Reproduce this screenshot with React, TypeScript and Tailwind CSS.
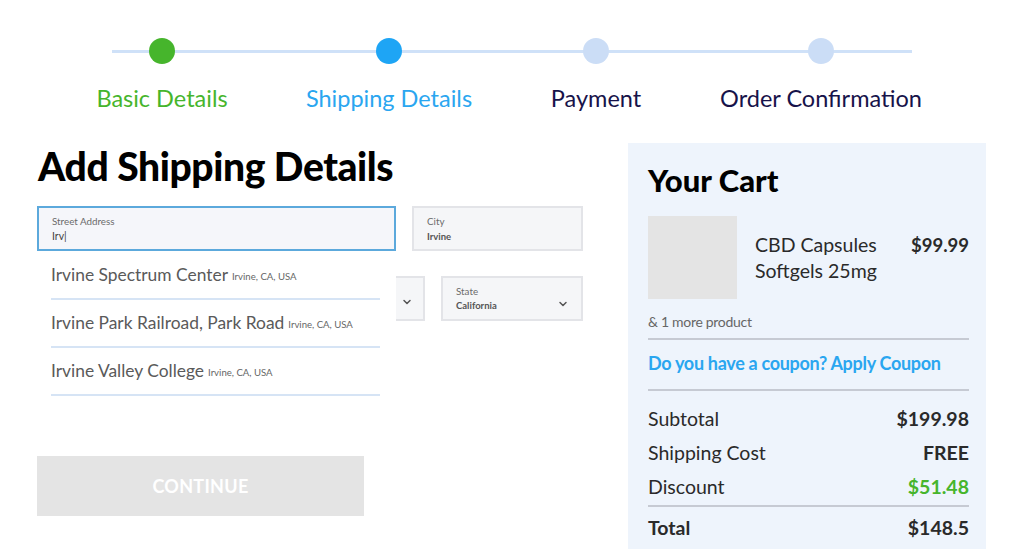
import { ChevronDown } from "lucide-react";

const steps = [
  { label: "Basic Details", dot: "bg-[#46b52c]", text: "text-[#46b52c]", ml: "ml-[62px]" },
  { label: "Shipping Details", dot: "bg-[#1ea5f5]", text: "text-[#2aa6f0]", ml: "ml-[27px]" },
  { label: "Payment", dot: "bg-[#cbddf6]", text: "text-[#17134a]", ml: "ml-[7px]" },
  { label: "Order Confirmation", dot: "bg-[#cbddf6]", text: "text-[#17134a]", ml: "ml-[25px]" },
];

const suggestions = [
  "Irvine Spectrum Center",
  "Irvine Park Railroad, Park Road",
  "Irvine Valley College",
];

const App = () => {
  return (
    <main className="h-[549px] w-[1024px] overflow-hidden bg-white font-['Lato',sans-serif]">
      {/* stepper */}
      <div className="relative pt-[38px]">
        <div className="absolute left-[112px] top-[50px] h-[3px] w-[800px] bg-[#cfe1f8]" />
        <div className="relative flex">
          {steps.map((s) => (
            <div key={s.label} className={`${s.ml} flex w-[200px] flex-col items-center`}>
              <div className={`h-[26px] w-[26px] rounded-full ${s.dot}`} />
              <span className={`mt-[19px] whitespace-nowrap text-[23.5px] leading-[30px] ${s.text}`}>{s.label}</span>
            </div>
          ))}
        </div>
      </div>

      <div className="mt-[30px] flex">
        {/* form */}
        <section className="ml-[37px] w-[546px] pt-[1px]">
          <h1 className="ml-[1px] whitespace-nowrap text-[39px] font-black leading-[44px] tracking-[-0.4px] text-black">
            Add Shipping Details
          </h1>

          <div className="relative mt-[18px]">
            <div className="flex gap-[16px]">
              <div className="h-[45px] w-[359px] border-2 border-[#5ca9dc] bg-[#f5f6fa] px-[13px] pt-[7px]">
                <div className="text-[9.8px] leading-[12px] text-[#6b6b6b]">Street Address</div>
                <div className="mt-[3px] text-[10.5px] leading-[12px] text-[#444]">Irv|</div>
              </div>
              <div className="h-[45px] flex-1 border-2 border-[#e3e4e8] bg-[#f5f6f8] px-[13px] pt-[7px]">
                <div className="text-[9.8px] leading-[12px] text-[#6b6b6b]">City</div>
                <div className="mt-[4px] text-[9.5px] font-bold leading-[12px] text-[#555]">Irvine</div>
              </div>
            </div>

            <div className="mt-[25px] flex gap-[16px]">
              <div className="flex h-[45px] w-[388px] items-end justify-end border-2 border-[#e3e4e8] bg-[#f5f6f8] px-[10px] pb-[11px]">
                <ChevronDown className="h-[12px] w-[12px] text-[#555]" strokeWidth={3} />
              </div>
              <div className="flex h-[45px] flex-1 items-center justify-between border-2 border-[#e3e4e8] bg-[#f5f6f8] pl-[13px] pr-[12px]">
                <div>
                  <div className="text-[9.8px] leading-[12px] text-[#6b6b6b]">State</div>
                  <div className="mt-[3px] text-[9.5px] font-bold leading-[12px] text-[#555]">California</div>
                </div>
                <ChevronDown className="mt-[10px] h-[12px] w-[12px] text-[#555]" strokeWidth={3} />
              </div>
            </div>

            {/* autocomplete menu */}
            <ul className="absolute left-0 top-[46px] w-[359px] bg-white pb-[10px] pl-[14px] pr-[16px]">
              {suggestions.map((s) => (
                <li key={s} className="flex h-[48px] items-center whitespace-nowrap border-b-2 border-[#d6e4f5] pt-[1px]">
                  <span className="text-[17.4px] text-[#5a5a5a]">{s}</span>
                  <span className="ml-[4px] mt-[4px] text-[9.6px] text-[#666]">Irvine, CA, USA</span>
                </li>
              ))}
            </ul>
          </div>

          <button className="mt-[135px] flex h-[60px] w-[327px] items-center justify-center bg-[#e4e4e4] text-[18px] font-bold tracking-[0.3px] text-white">
            CONTINUE
          </button>
        </section>

        {/* cart */}
        <aside className="ml-[45px] h-[420px] w-[358px] bg-[#eef4fc] pl-[20px] pr-[17px] pt-[20px]">
          <h2 className="text-[31px] font-black leading-[34px] text-black">Your Cart</h2>
          <div className="mt-[19px] flex">
            <div className="h-[83px] w-[89px] bg-[#e4e4e4]" />
            <div className="ml-[18px] pt-[16px] text-[19.5px] leading-[26px] text-[#2a2a2a]">
              <div>CBD Capsules</div>
              <div>Softgels 25mg</div>
            </div>
            <div className="ml-auto pt-[16px] text-[18.5px] font-bold leading-[26px] text-[#2a2a2a]">$99.99</div>
          </div>
          <div className="mt-[15px] text-[14px] leading-[16px] tracking-[-0.3px] text-[#666]">& 1 more product</div>
          <div className="mt-[8px] h-[2px] bg-[#c6cad3]" />
          <div className="mt-[12px] whitespace-nowrap text-[18px] font-bold leading-[22px] tracking-[-0.3px] text-[#2aa6f0]">
            Do you have a coupon? Apply Coupon
          </div>
          <div className="mt-[15px] h-[2px] bg-[#c6cad3]" />
          <div className="mt-[16px] flex flex-col gap-[10px] text-[19.5px] leading-[24px] text-[#2a2a2a]">
            <div className="flex justify-between">
              <span>Subtotal</span>
              <span className="font-bold">$199.98</span>
            </div>
            <div className="flex justify-between">
              <span>Shipping Cost</span>
              <span className="font-bold">FREE</span>
            </div>
            <div className="flex justify-between">
              <span>Discount</span>
              <span className="font-bold text-[#46b52c]">$51.48</span>
            </div>
          </div>
          <div className="mt-[6px] h-[2px] bg-[#c6cad3]" />
          <div className="mt-[9px] flex justify-between text-[19.5px] font-bold leading-[24px] text-[#2a2a2a]">
            <span>Total</span>
            <span>$148.5</span>
          </div>
        </aside>
      </div>
    </main>
  );
};

export default App;
